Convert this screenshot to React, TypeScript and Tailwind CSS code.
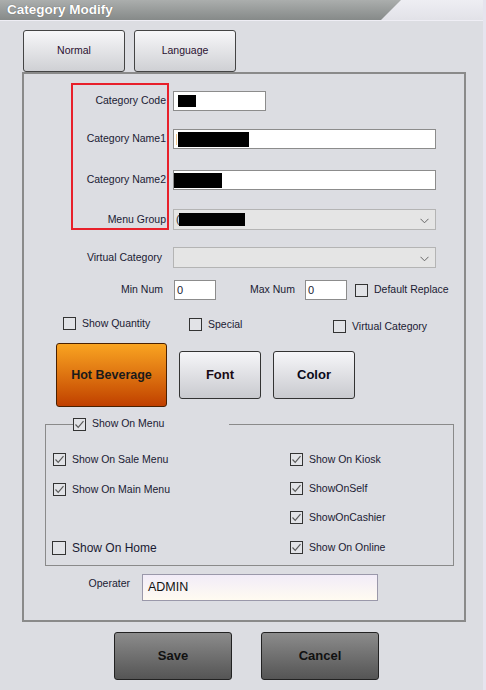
import React from 'react';

function Check({ checked, big }: { checked?: boolean; big?: boolean }) {
  return (
    <span
      className={`${big ? 'w-[14px] h-[14px]' : 'w-[13px] h-[13px]'} shrink-0 border border-[#333333] bg-[#e2e3e7] flex items-center justify-center`}
    >
      {checked && (
        <svg width="11" height="11" viewBox="0 0 11 11">
          <polyline points="1.5,5.5 4.2,8.3 9.5,2.2" fill="none" stroke="#5a5a5a" strokeWidth="1.2" />
        </svg>
      )}
    </span>
  );
}

function CheckItem({ label, checked, big }: { label: string; checked?: boolean; big?: boolean }) {
  return (
    <div className="flex items-center gap-[6px]">
      <Check checked={checked} big={big} />
      <span className={big ? 'text-[12px]' : 'text-[10.5px]'}>{label}</span>
    </div>
  );
}

function Chevron() {
  return (
    <svg width="9" height="6" viewBox="0 0 9 6" className="absolute right-[6px] top-[8px]">
      <polyline points="0.5,0.8 4.5,4.8 8.5,0.8" fill="none" stroke="#666666" strokeWidth="1" />
    </svg>
  );
}

export default function App() {
  return (
    <div className="w-[486px] h-[690px] bg-[#dcdde2] overflow-hidden font-['Liberation_Sans',Arial,sans-serif] text-[#1a1a33] border-r-[3px] border-[#e6e4ee] flex flex-col">
      {/* Title bar */}
      <div className="h-[21px] shrink-0 flex bg-linear-to-b from-[#eeeef3] to-[#e2e2e8] border-b border-[#efeef5]">
        <div className="w-[402px] h-[20px] bg-linear-to-b from-[#abaead] to-[#868a89] [clip-path:polygon(0_0,401px_0,381px_100%,0_100%)] pl-[7px] text-white font-bold text-[13.5px] leading-[20px] [text-shadow:0_0_1px_#555]">
          Category Modify
        </div>
      </div>

      <div className="pl-[22px] flex flex-col">
        {/* Tabs */}
        <div className="mt-[9px] ml-[1px] flex gap-[9px]">
          <button className="w-[102px] h-[42px] rounded-[3px] border border-[#444444] bg-linear-to-b from-[#f7f7f9] to-[#cfd0d4] text-[10.5px] text-[#2a1030]">
            Normal
          </button>
          <button className="w-[102px] h-[42px] rounded-[3px] border border-[#444444] bg-linear-to-b from-[#f7f7f9] to-[#cfd0d4] text-[10.5px] text-[#2a1030]">
            Language
          </button>
        </div>

        {/* Main panel */}
        <div className="relative w-[444px] h-[550px] border-2 border-[#8a8a8a] flex flex-col">
          <div className="absolute left-[47px] top-[9px] w-[98px] h-[147px] border-2 border-[#e8202a]" />

          <div className="mt-[17px] flex items-center h-[20px]">
            <span className="w-[142px] text-right text-[10.5px]">Category Code</span>
            <div className="ml-[7px] w-[93px] h-[20px] border border-[#8c8c8c] bg-white flex items-center">
              <span className="ml-[4px] w-[18px] h-[12px] bg-black" />
            </div>
          </div>

          <div className="mt-[18px] flex items-center h-[20px]">
            <span className="w-[142px] text-right text-[10.5px]">Category Name1</span>
            <div className="ml-[7px] w-[263px] h-[20px] border border-[#8c8c8c] bg-white flex items-center">
              <span className="ml-[2px] w-[1px] h-[11px] bg-[#f0c890]" />
              <span className="ml-[1px] w-[71px] h-[15px] bg-black" />
            </div>
          </div>

          <div className="mt-[21px] flex items-center h-[20px]">
            <span className="w-[142px] text-right text-[10.5px]">Category Name2</span>
            <div className="ml-[7px] w-[263px] h-[20px] border border-[#8c8c8c] bg-white flex items-center">
              <span className="ml-[0px] w-[48px] h-[15px] bg-black" />
            </div>
          </div>

          <div className="mt-[19px] flex items-center h-[21px]">
            <span className="w-[142px] text-right text-[10.5px]">Menu Group</span>
            <div className="relative ml-[7px] w-[263px] h-[21px] border border-[#b4b4b4] bg-[#e5e5e5] flex items-center">
              <span className="ml-[2px] text-[11px] text-[#333]">(</span>
              <span className="-ml-[1px] w-[66px] h-[13px] bg-black" />
              <Chevron />
            </div>
          </div>

          <div className="mt-[17px] flex items-center h-[21px]">
            <span className="w-[142px] pr-[4px] text-right text-[10.5px]">Virtual Category</span>
            <div className="relative ml-[7px] w-[263px] h-[21px] border border-[#b4b4b4] bg-[#e5e5e5]">
              <Chevron />
            </div>
          </div>

          <div className="mt-[12px] flex items-center h-[20px]">
            <span className="w-[139px] text-right text-[10.5px]">Min Num</span>
            <div className="ml-[11px] w-[42px] h-[20px] border border-[#8c8c8c] bg-white text-[11px] pl-[2px] leading-[18px]">0</div>
            <span className="ml-[34px] w-[55px] text-[10.5px]">Max Num</span>
            <div className="w-[42px] h-[20px] border border-[#8c8c8c] bg-white text-[11px] pl-[2px] leading-[18px]">0</div>
            <div className="ml-[8px]">
              <CheckItem label="Default Replace" />
            </div>
          </div>

          <div className="mt-[16px] flex items-start h-[17px]">
            <div className="ml-[39px] w-[126px]">
              <CheckItem label="Show Quantity" />
            </div>
            <div className="mt-[1px] w-[144px]">
              <CheckItem label="Special" />
            </div>
            <div className="mt-[3px]">
              <CheckItem label="Virtual Category" />
            </div>
          </div>

          <div className="mt-[10px] ml-[32px] flex items-center h-[64px] gap-[12px]">
            <button className="w-[111px] h-[64px] rounded-[3px] border border-[#4a2000] bg-linear-to-b from-[#f9a421] to-[#c03f00] font-bold text-[12.5px] text-[#1a1a1a]">
              Hot Beverage
            </button>
            <button className="w-[82px] h-[48px] rounded-[3px] border border-[#333333] bg-linear-to-b from-[#f6f6f9] to-[#c9cacf] font-bold text-[13px] text-[#1a0a14]">
              Font
            </button>
            <button className="w-[82px] h-[48px] rounded-[3px] border border-[#333333] bg-linear-to-b from-[#f6f6f9] to-[#c9cacf] font-bold text-[13px] text-[#0a0a1a]">
              Color
            </button>
          </div>

          <fieldset className="mt-[10px] ml-[21px] w-[409px] border border-[#8a8a8a]">
            <legend className="ml-[27px] w-[156px] h-[14px] flex items-center gap-[6px]">
              <Check checked />
              <span className="text-[10.5px]">Show On Menu</span>
            </legend>
            <div className="pt-[21px] pl-[7px] grid grid-cols-[237px_1fr] grid-rows-[29px_29px_29px_26px] items-start">
              <CheckItem label="Show On Sale Menu" checked />
              <CheckItem label="Show On Kiosk" checked />
              <div className="mt-[1px]">
                <CheckItem label="Show On Main Menu" checked />
              </div>
              <CheckItem label="ShowOnSelf" checked />
              <div />
              <CheckItem label="ShowOnCashier" checked />
              <div className="-ml-[1px]">
                <CheckItem label="Show On Home" big />
              </div>
              <div className="mt-[1px]">
                <CheckItem label="Show On Online" checked />
              </div>
            </div>
          </fieldset>

          <div className="mt-[8px] flex items-start">
            <span className="w-[106px] pt-[2px] text-right text-[10.5px]">Operater</span>
            <div className="ml-[12px] w-[236px] h-[27px] border border-[#9a98aa] bg-linear-to-b from-[#f2ecf8] to-[#fffbf1] pl-[5px] flex items-center text-[12.5px] text-[#111]">
              ADMIN
            </div>
          </div>
        </div>

        {/* Bottom buttons */}
        <div className="mt-[10px] ml-[92px] flex gap-[29px]">
          <button className="w-[118px] h-[48px] rounded-[3px] border border-[#222222] bg-linear-to-b from-[#8c8c8c] to-[#555555] font-bold text-[13px] text-[#111]">
            Save
          </button>
          <button className="w-[118px] h-[48px] rounded-[3px] border border-[#222222] bg-linear-to-b from-[#8c8c8c] to-[#555555] font-bold text-[13px] text-[#111]">
            Cancel
          </button>
        </div>
      </div>
    </div>
  );
}
